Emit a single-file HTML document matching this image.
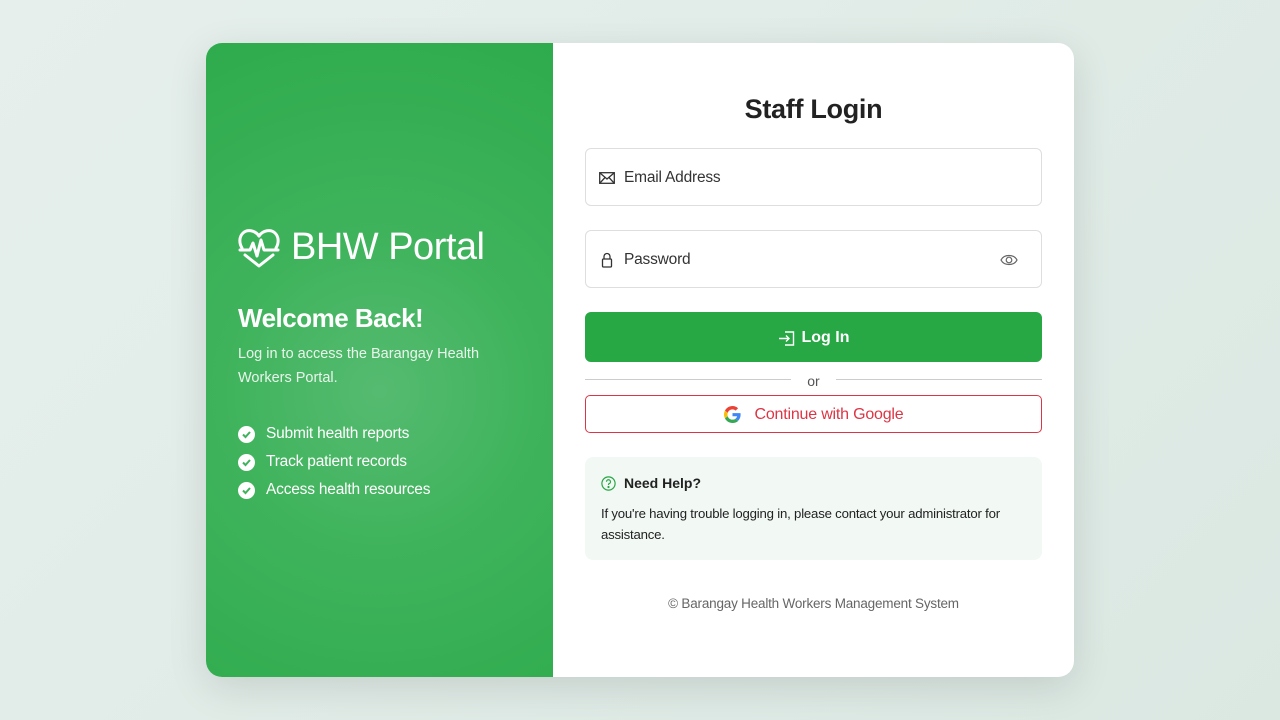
<!DOCTYPE html>
<html><head><meta charset="utf-8"><style>
*{box-sizing:border-box;margin:0;padding:0}
body{width:1280px;height:720px;overflow:hidden;font-family:"Liberation Sans",sans-serif;background:linear-gradient(135deg,#e6efec,#dbe8e2);position:relative}
.card{position:absolute;left:206px;top:43px;width:868px;height:634px;border-radius:16px;overflow:hidden;background:#fff;box-shadow:0 10px 40px rgba(0,0,0,.12);display:flex}
.left{width:347px;height:100%;background:radial-gradient(circle at 50% 55%,#55bb70 0%,#3fb35c 40%,#2eab4c 100%);color:#fff;padding-left:32px;position:relative}
.logo{position:absolute;top:183px;left:32px;display:flex;align-items:center}
.logo span{font-size:38px;margin-left:11px;letter-spacing:-.5px}
h2{position:absolute;top:260px;left:32px;font-size:26px;font-weight:bold;letter-spacing:-.5px}
.sub{position:absolute;top:299px;left:32px;font-size:14.5px;line-height:24px;color:#e9f6ec;width:280px}
ul{position:absolute;top:377px;left:32px;list-style:none}
li{display:flex;align-items:center;font-size:15.5px;height:28px;letter-spacing:-.2px}
li i{width:17px;height:17px;border-radius:50%;background:#fff;margin-right:11px;display:flex;align-items:center;justify-content:center}
.right{flex:1;position:relative}
h1{position:absolute;top:51px;left:0;right:0;text-align:center;font-size:27px;color:#222;font-weight:bold;letter-spacing:-.3px}
.inp{position:absolute;left:32px;width:457px;height:58px;border:1px solid #dedede;border-radius:6px;display:flex;align-items:center;padding-left:13px;padding-top:2px;font-size:15.5px;color:#333;letter-spacing:-.2px}
.inp svg{margin-right:9px}
.btn{position:absolute;left:32px;top:269px;width:457px;height:50px;background:#28a745;border-radius:6px;color:#fff;font-weight:bold;font-size:16px;display:flex;align-items:center;justify-content:center;padding-top:2px}
.or{position:absolute;top:330px;left:32px;width:457px;height:14px;font-size:14px;color:#555;text-align:center}
.or:before,.or:after{content:"";position:absolute;top:6px;height:1px;background:#ccc;width:206px}
.or:before{left:0}.or:after{right:0}
.g{position:absolute;left:32px;top:352px;width:457px;height:38px;border:1px solid #dc3545;border-radius:5px;color:#dc3545;font-size:16px;display:flex;align-items:center;justify-content:center;padding-top:1px;letter-spacing:-.2px}
.help{position:absolute;left:32px;top:414px;width:457px;height:103px;background:#f2f8f4;border-radius:8px;padding:18px 16px;font-size:13.2px;color:#222}
.help b{display:flex;align-items:center;font-size:14px;margin-bottom:12px}
.help p{line-height:21px;letter-spacing:-.2px;padding-right:6px}
.foot{position:absolute;top:553px;left:0;right:0;text-align:center;font-size:13.5px;color:#666;letter-spacing:-.2px}
</style></head><body>
<div class="card">
<div class="left">
<div class="logo"><svg width="42" height="40" viewBox="0 0 42 40" fill="none" stroke="#fff" stroke-width="3" stroke-linejoin="round" stroke-linecap="round"><path d="M21 8C17 2 9 1 5 5C1 9 1 15 4 20"/><path d="M21 8C25 2 33 1 37 5C41 9 41 15 38 20"/><path d="M2 22H12L15 15L19 28L23 12L26 22H40"/><path d="M7 27L21 38L35 27"/></svg><span>BHW Portal</span></div>
<h2>Welcome Back!</h2>
<div class="sub">Log in to access the Barangay Health Workers Portal.</div>
<ul>
<li><i><svg width="11" height="11" viewBox="0 0 11 11"><path d="M2 5.5L4.5 8L9 3" stroke="#3fb35c" stroke-width="2" fill="none"/></svg></i>Submit health reports</li>
<li><i><svg width="11" height="11" viewBox="0 0 11 11"><path d="M2 5.5L4.5 8L9 3" stroke="#3fb35c" stroke-width="2" fill="none"/></svg></i>Track patient records</li>
<li><i><svg width="11" height="11" viewBox="0 0 11 11"><path d="M2 5.5L4.5 8L9 3" stroke="#3fb35c" stroke-width="2" fill="none"/></svg></i>Access health resources</li>
</ul>
</div>
<div class="right">
<h1>Staff Login</h1>
<div class="inp" style="top:105px"><svg width="16" height="12" viewBox="0 0 16 12" fill="none" stroke="#333" stroke-width="1.3"><rect x=".7" y=".7" width="14.6" height="10.6"/><path d="M.7 .7L8 7L15.3 .7M.7 11.3L6 5.5M15.3 11.3L10 5.5"/></svg>Email Address</div>
<div class="inp" style="top:187px"><svg width="16" height="16" viewBox="0 0 16 16" fill="none" stroke="#333" stroke-width="1.3"><rect x="3.5" y="7" width="9" height="8" rx="1"/><path d="M5 7V4.5a3 3 0 0 1 6 0V7"/></svg>Password<svg style="position:absolute;right:14px" width="18" height="12" viewBox="0 0 18 12" fill="none" stroke="#666" stroke-width="1.2"><path d="M1 6C4 0 14 0 17 6C14 12 4 12 1 6Z"/><circle cx="9" cy="6" r="2.8"/></svg></div>
<div class="btn"><svg width="17" height="15" viewBox="0 0 17 15" fill="none" stroke="#fff" stroke-width="1.4" style="margin-right:7px"><path d="M7 1H15.5V14H7"/><path d="M1 7.5H11M8 4.5L11 7.5L8 10.5"/></svg>Log In</div>
<div class="or">or</div>
<div class="g"><svg width="17" height="17" viewBox="0 0 48 48" style="margin-right:14px"><path fill="#EA4335" d="M24 9.5c3.5 0 6.6 1.2 9 3.5l6.7-6.7C35.6 2.4 30.2 0 24 0 14.6 0 6.6 5.4 2.7 13.2l7.8 6.1C12.300 13.6 17.7 9.5 24 9.5z"/><path fill="#4285F4" d="M46.9 24.5c0-1.6-.1-3.1-.4-4.5H24v9h12.9c-.6 3-2.3 5.5-4.8 7.2l7.6 5.9c4.4-4.1 7.2-10.2 7.2-17.6z"/><path fill="#FBBC05" d="M10.5 28.7c-.5-1.4-.8-3-.8-4.700s.3-3.2.8-4.7l-7.8-6.1C1 16.6 0 20.2 0 24s1 7.4 2.7 10.8l7.8-6.1z"/><path fill="#34A853" d="M24 48c6.5 0 11.9-2.1 15.9-5.8l-7.6-5.9c-2.1 1.4-4.9 2.3-8.3 2.3-6.3 0-11.7-4.1-13.5-9.8l-7.8 6.1C6.6 42.6 14.6 48 24 48z"/></svg>Continue with Google</div>
<div class="help"><b><svg width="15" height="15" viewBox="0 0 15 15" fill="none" stroke="#28a745" stroke-width="1.2" style="margin-right:8px"><circle cx="7.5" cy="7.5" r="6.6"/><path d="M5.5 5.8a2 2 0 1 1 2.5 1.9c-.4.2-.5.5-.5 1V9"/><circle cx="7.5" cy="11" r=".5" fill="#28a745"/></svg>Need Help?</b><p>If you're having trouble logging in, please contact your administrator for assistance.</p></div>
<div class="foot">© Barangay Health Workers Management System</div>
</div>
</div>
</body></html>
